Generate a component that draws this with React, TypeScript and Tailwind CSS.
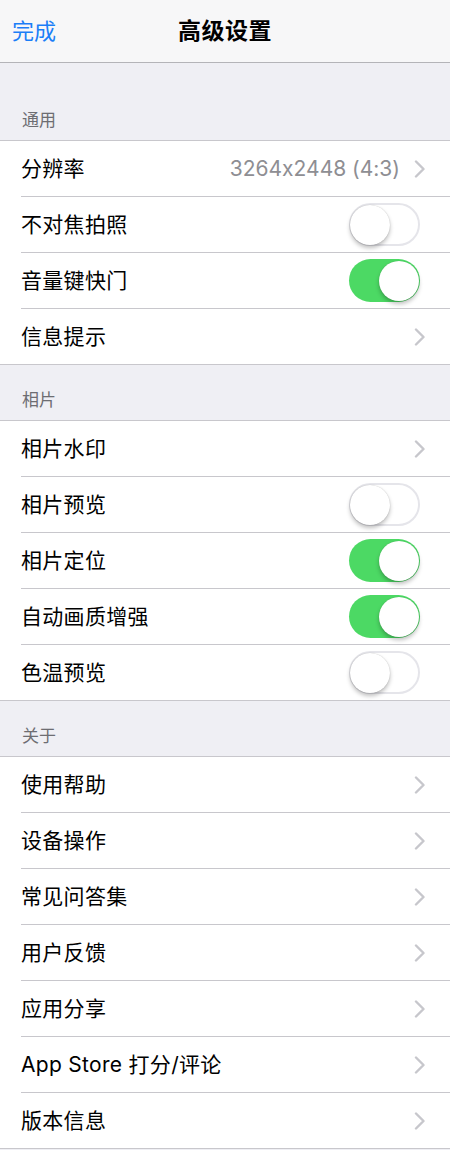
import React from "react";

type Row =
  | { label: string; kind: "chevron"; value?: string }
  | { label: string; kind: "toggle"; on: boolean };

const sections: { title: string; first?: boolean; rows: Row[] }[] = [
  {
    title: "通用",
    first: true,
    rows: [
      { label: "分辨率", kind: "chevron", value: "3264x2448 (4:3)" },
      { label: "不对焦拍照", kind: "toggle", on: false },
      { label: "音量键快门", kind: "toggle", on: true },
      { label: "信息提示", kind: "chevron" },
    ],
  },
  {
    title: "相片",
    rows: [
      { label: "相片水印", kind: "chevron" },
      { label: "相片预览", kind: "toggle", on: false },
      { label: "相片定位", kind: "toggle", on: true },
      { label: "自动画质增强", kind: "toggle", on: true },
      { label: "色温预览", kind: "toggle", on: false },
    ],
  },
  {
    title: "关于",
    rows: [
      { label: "使用帮助", kind: "chevron" },
      { label: "设备操作", kind: "chevron" },
      { label: "常见问答集", kind: "chevron" },
      { label: "用户反馈", kind: "chevron" },
      { label: "应用分享", kind: "chevron" },
      { label: "App Store 打分/评论", kind: "chevron" },
      { label: "版本信息", kind: "chevron" },
    ],
  },
];

function Chevron() {
  return (
    <svg width="12" height="18" viewBox="0 0 12 18" className="shrink-0">
      <path d="M2 1.5 L9.5 9 L2 16.5" fill="none" stroke="#c7c7cc" strokeWidth="2.4" strokeLinecap="round" strokeLinejoin="round" />
    </svg>
  );
}

function Toggle({ on }: { on: boolean }) {
  if (on) {
    return (
      <div className="relative w-[71px] h-[43px] rounded-full bg-[#4cd964] shrink-0">
        <div className="absolute right-[1px] top-[1.5px] w-[40px] h-[40px] rounded-full bg-white shadow-[0_3px_4px_rgba(0,0,0,0.25),0_0_1px_rgba(0,0,0,0.2)]" />
      </div>
    );
  }
  return (
    <div className="relative w-[71px] h-[43px] rounded-full bg-white border-[2px] border-[#e5e5ea] shrink-0">
      <div className="absolute left-[-1px] top-[-0.5px] w-[40px] h-[40px] rounded-full bg-white shadow-[0_3px_4px_rgba(0,0,0,0.25),0_0_1px_rgba(0,0,0,0.25)]" />
    </div>
  );
}

export default function App() {
  return (
    <div
      className="w-[450px] min-h-[1150px] bg-[#efeff4] text-black [font-feature-settings:'calt'_0]"
      style={{ fontFamily: 'Inter, "Noto Sans CJK SC", sans-serif' }}
    >
      <div className="h-[63px] bg-[#f7f7f8] border-b border-[#b4b4b8] grid grid-cols-[1fr_auto_1fr] items-center">
        <div className="pl-[12px] text-[22px] text-[#1b7ef7] leading-none">完成</div>
        <div className="text-[23px] font-semibold leading-none tracking-[0.5px]">高级设置</div>
        <div />
      </div>
      {sections.map((s) => (
        <div key={s.title}>
          <div
            className={`${s.first ? "h-[78px]" : "h-[56px]"} flex items-end pl-[22px] pb-[10px] border-b border-[#c8c7cc]`}
          >
            <span className="text-[17px] leading-[20px] text-[#6d6d72]">{s.title}</span>
          </div>
          {s.rows.map((r, i) => {
            const last = i === s.rows.length - 1;
            return (
              <div
                key={r.label}
                className={`h-[56px] bg-white pl-[21px] flex ${last ? "border-b border-[#c8c7cc]" : ""}`}
              >
                <div
                  className={`flex-1 flex items-center justify-between ${
                    last ? "" : "border-b border-[#c8c7cc]"
                  } ${r.kind === "toggle" ? "pr-[30px]" : "pr-[24px]"}`}
                >
                  <span className="text-[21px] leading-none tracking-[0.3px]">{r.label}</span>
                  {r.kind === "toggle" ? (
                    <Toggle on={r.on} />
                  ) : (
                    <div className="flex items-center gap-[14px]">
                      {r.value && (
                        <span className="text-[21px] leading-none text-[#8e8e93]">{r.value}</span>
                      )}
                      <Chevron />
                    </div>
                  )}
                </div>
              </div>
            );
          })}
        </div>
      ))}
    </div>
  );
}
